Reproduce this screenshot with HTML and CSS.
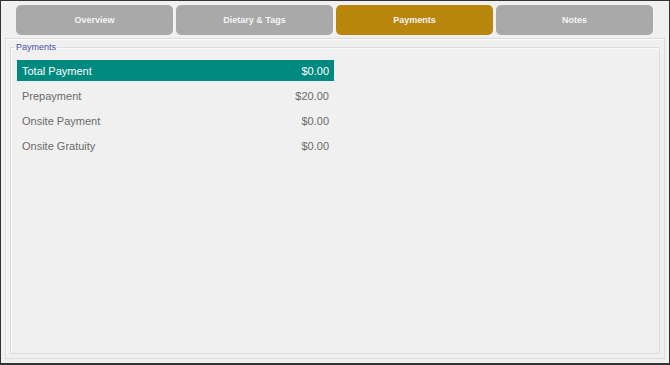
FILE: index.html
```html
<!DOCTYPE html>
<html lang="en">
<head>
    <meta charset="UTF-8">
    <title>Payments</title>
    <link rel="stylesheet" href="styles.css">
</head>
<body>
    <div class="frame">
        <!-- Tabs -->
        <div class="tabs">
            <div class="tab">Overview</div>
            <div class="tab">Dietary &amp; Tags</div>
            <div class="tab active">Payments</div>
            <div class="tab">Notes</div>
        </div>

        <div class="panel">
            <fieldset class="group">
                <legend>Payments</legend>
                <div class="rows">
                    <div class="row total"><span>Total Payment</span><span>$0.00</span></div>
                    <div class="row"><span>Prepayment</span><span>$20.00</span></div>
                    <div class="row"><span>Onsite Payment</span><span>$0.00</span></div>
                    <div class="row"><span>Onsite Gratuity</span><span>$0.00</span></div>
                </div>
            </fieldset>
        </div>
    </div>
</body>
</html>
```

FILE: styles.css
```css
html, body {
    margin: 0;
    padding: 0;
}
body {
    font-family: "Liberation Sans", Arial, sans-serif;
    background: #f0f0f0;
}
.frame {
    width: 670px;
    height: 365px;
    box-sizing: border-box;
    border: 1px solid #333;
    border-bottom-width: 2px;
    padding: 4px 4px 0 4px;
    background: #f0f0f0;
}
.tabs {
    display: grid;
    grid-template-columns: repeat(4, 157px);
    gap: 3px;
    padding-left: 11px;
    height: 30px;
}
.tab {
    background: #a9a9a9;
    border-radius: 5px;
    color: #f4f4f4;
    font-size: 9px;
    font-weight: bold;
    display: flex;
    align-items: center;
    justify-content: center;
}
.tab.active {
    background: #b8860b;
}
.panel {
    margin-top: 3px;
    height: 321px;
    box-sizing: border-box;
    border: 1px solid #dcdcdc;
    box-shadow: inset 1px 1px 0 #fafafa;
    padding: 3px 4px 4px 4px;
}
.group {
    margin: 0;
    height: 312px;
    box-sizing: border-box;
    border: 1px solid #dcdcdc;
    box-shadow: inset 1px 1px 0 #fafafa;
    padding: 8px 325px 0 6px;
}
.group legend {
    font-size: 9px;
    line-height: 10px;
    color: #4b4ba3;
    padding: 0 1px;
    margin-left: -2px;
}
.rows {
    display: flex;
    flex-direction: column;
    gap: 4px;
    width: 317px;
}
.row {
    height: 21px;
    display: flex;
    align-items: center;
    justify-content: space-between;
    padding: 0 5px;
    font-size: 11px;
    color: #6a6a6a;
}
.row.total {
    background: #00897f;
    color: #fff;
}
```
